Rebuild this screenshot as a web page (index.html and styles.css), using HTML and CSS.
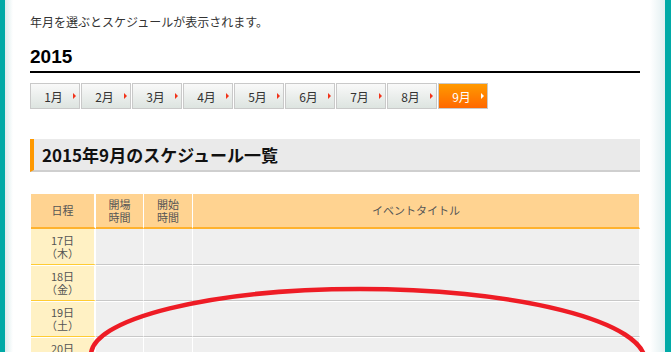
FILE: index.html
```html
<!DOCTYPE html>
<html lang="ja">
<head>
  <meta charset="UTF-8">
  <meta name="viewport" content="width=device-width, initial-scale=1.0">
  <title>スケジュール</title>
  <link rel="stylesheet" href="styles.css">
</head>
<body>

  <div class="page">
    <p class="lead">年月を選ぶとスケジュールが表示されます。</p>

    <h2 class="year">2015</h2>

    <ul class="months">
      <li><a href="#">1月</a></li>
      <li><a href="#">2月</a></li>
      <li><a href="#">3月</a></li>
      <li><a href="#">4月</a></li>
      <li><a href="#">5月</a></li>
      <li><a href="#">6月</a></li>
      <li><a href="#">7月</a></li>
      <li><a href="#">8月</a></li>
      <li class="current"><a href="#">9月</a></li>
    </ul>

    <h3 class="section-title">2015年9月のスケジュール一覧</h3>

    <table class="schedule">
      <thead>
        <tr>
          <th class="col-date">日程</th>
          <th class="col-open">開場<br>時間</th>
          <th class="col-start">開始<br>時間</th>
          <th>イベントタイトル</th>
        </tr>
      </thead>
      <tbody>
        <tr><td class="date">17日<br>（木）</td><td></td><td></td><td></td></tr>
        <tr><td class="date">18日<br>（金）</td><td></td><td></td><td></td></tr>
        <tr><td class="date">19日<br>（土）</td><td></td><td></td><td></td></tr>
        <tr><td class="date">20日<br>（日）</td><td></td><td></td><td></td></tr>
        <tr><td class="date">21日<br>（月）</td><td></td><td></td><td></td></tr>
      </tbody>
    </table>
  </div>

  <!-- 赤丸の書き込み -->
  <svg class="mark" width="671" height="352" viewBox="0 0 671 352">
    <path d="M91 366 L91 355 A269 66 0 0 1 360 289 A285 72 0 0 1 645 361 L645 370"
          fill="none" stroke="#ee1c25" stroke-width="4.5"/>
  </svg>

</body>
</html>
```

FILE: styles.css
```css
html {
  overflow: hidden;
}

body {
  margin: 0;
  padding: 0;
  position: relative;
  background-color: #00aaa7;
  color: #333;
  font-family: "Noto Sans CJK JP", sans-serif;
}

.page {
  width: 660px;
  min-height: 100vh;
  margin-left: 5px;
  padding: 13px 25px 40px;
  box-sizing: border-box;
  background: linear-gradient(to right, #dbeced, #fff 8px, #fff 645px, #e2eff1 660px);
}

.lead {
  margin: 0;
  font-size: 12px;
  line-height: 18px;
}

.year {
  margin: 15px 0 0;
  padding-bottom: 3px;
  border-bottom: 2px solid #000;
  color: #000;
  font: bold 19px/22px "Liberation Sans", "Noto Sans CJK JP", sans-serif;
}

/* 月の切り替え */
.months {
  display: flex;
  gap: 1px;
  margin: 10px 0 0;
  padding: 0;
  list-style: none;
}

.months a {
  position: relative;
  display: flex;
  align-items: center;
  justify-content: center;
  width: 50px;
  height: 26px;
  padding-right: 3px;
  box-sizing: border-box;
  border: 1px solid #c9c9c9;
  background: linear-gradient(#f9f9f9, #dde4e0);
  color: #333;
  font-size: 12px;
  text-decoration: none;
}

.months a::after {
  content: "";
  position: absolute;
  right: 3px;
  top: 50%;
  margin-top: -3px;
  border-left: 3px solid #f2331a;
  border-top: 3px solid transparent;
  border-bottom: 3px solid transparent;
}

.months .current a {
  background: linear-gradient(#ff9a00, #ff6800);
  color: #fff;
}

.months .current a::after {
  border-left-color: #fff;
}

.section-title {
  margin: 30px 0 0;
  height: 31px;
  padding-left: 8px;
  border-left: 4px solid #ff9900;
  border-bottom: 2px solid #cfcfcf;
  background-color: #eaeaea;
  color: #111;
  font-size: 17px;
  font-weight: bold;
  line-height: 31px;
}

/* スケジュール表 */
.schedule {
  width: 609px;
  margin: 22px 0 0 1px;
  table-layout: fixed;
  border-collapse: separate;
  border-spacing: 0;
  color: #555;
  font-size: 11px;
  text-align: center;
}

.schedule th,
.schedule td {
  padding: 0;
  box-sizing: border-box;
  border-right: 1px solid #fff;
}

.schedule th {
  height: 35px;
  background-color: #ffd391;
  border-bottom: 2px solid #ffb22e;
  font-weight: normal;
  line-height: 13px;
}

.schedule .col-date {
  width: 65px;
  border-right-width: 2px;
}

.schedule .col-open {
  width: 48px;
}

.schedule .col-start {
  width: 49px;
}

.schedule td {
  height: 36px;
  background-color: #efefef;
  border-bottom: 1px solid #c8c8c8;
  line-height: 13px;
}

.schedule tr + tr td {
  border-top: 1px solid #fff;
}

.schedule td.date {
  background-color: #fff1c4;
  border-right-width: 2px;
  border-bottom: 1px solid #ffcc33;
}

.mark {
  position: absolute;
  top: 0;
  left: 0;
  pointer-events: none;
}
```
